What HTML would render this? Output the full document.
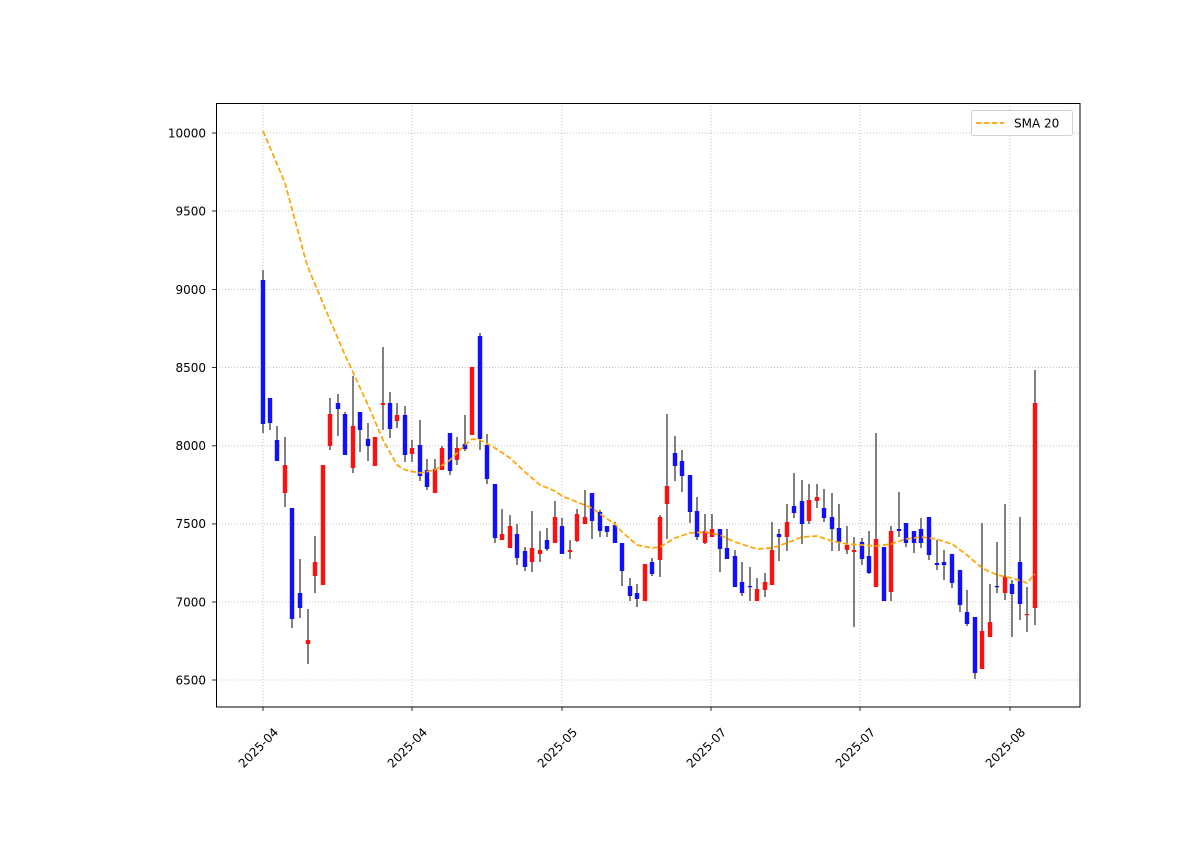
<!DOCTYPE html>
<html><head><meta charset="utf-8"><style>
html,body{margin:0;padding:0;background:#fff;}
svg{display:block;font-family:"DejaVu Sans","Liberation Sans",sans-serif;}
</style></head><body>
<svg id="s" width="1200" height="862" xmlns="http://www.w3.org/2000/svg">
<rect width="1200" height="862" fill="#fff"/>
<g stroke="#b0b0b0" stroke-width="0.8" stroke-dasharray="1,2">
<line x1="216" x2="1080" y1="133" y2="133"/><line x1="216" x2="1080" y1="211" y2="211"/>
<line x1="216" x2="1080" y1="289.5" y2="289.5"/><line x1="216" x2="1080" y1="367.6" y2="367.6"/>
<line x1="216" x2="1080" y1="445.8" y2="445.8"/><line x1="216" x2="1080" y1="523.9" y2="523.9"/>
<line x1="216" x2="1080" y1="602" y2="602"/><line x1="216" x2="1080" y1="680" y2="680"/>
<line y1="103" y2="707" x1="263" x2="263"/><line y1="103" y2="707" x1="412" x2="412"/>
<line y1="103" y2="707" x1="562" x2="562"/><line y1="103" y2="707" x1="711" x2="711"/>
<line y1="103" y2="707" x1="860" x2="860"/><line y1="103" y2="707" x1="1010" x2="1010"/>
</g>
<g id="c"></g>
<polyline fill="none" stroke="#ffa500" stroke-width="1.7" stroke-dasharray="5.5,2.5" points="263,131 285,183 307,265 330,320 345,355 368,405 383,440 397,465 405,470 420,473 435,470 450,460 465,445 472,439 480,440 495,448 510,458 525,472 540,485 555,491 562,496 577,502 592,508 600,514 615,524 622,532 637,545 652,548 660,547 675,538 690,533 705,532 720,535 735,542 757,549 772,548 787,543 802,537 817,536 832,541 847,544 862,545 876,546 891,544 906,539 921,537 936,539 952,544 967,555 982,568 997,575 1012,578 1027,583 1035,574"/>
<rect x="216.5" y="103.5" width="863.5" height="603.5" fill="none" stroke="#000" stroke-width="1"/>
<g stroke="#000" stroke-width="0.8">
<line x1="212" x2="216" y1="133" y2="133"/><line x1="212" x2="216" y1="211" y2="211"/>
<line x1="212" x2="216" y1="289.5" y2="289.5"/><line x1="212" x2="216" y1="367.6" y2="367.6"/>
<line x1="212" x2="216" y1="445.8" y2="445.8"/><line x1="212" x2="216" y1="523.9" y2="523.9"/>
<line x1="212" x2="216" y1="602" y2="602"/><line x1="212" x2="216" y1="680" y2="680"/>
<line y1="707" y2="711" x1="263" x2="263"/><line y1="707" y2="711" x1="412" x2="412"/>
<line y1="707" y2="711" x1="562" x2="562"/><line y1="707" y2="711" x1="711" x2="711"/>
<line y1="707" y2="711" x1="860" x2="860"/><line y1="707" y2="711" x1="1010" x2="1010"/>
</g>
<g font-size="12" fill="#000" text-anchor="end">
<text x="206" y="137.5">10000</text><text x="206" y="215.5">9500</text>
<text x="206" y="294">9000</text><text x="206" y="372">8500</text>
<text x="206" y="450">8000</text><text x="206" y="528">7500</text>
<text x="206" y="606.5">7000</text><text x="206" y="684.5">6500</text>
<text transform="translate(279,733) rotate(-45)">2025-04</text>
<text transform="translate(428,733) rotate(-45)">2025-04</text>
<text transform="translate(578,733) rotate(-45)">2025-05</text>
<text transform="translate(727,733) rotate(-45)">2025-07</text>
<text transform="translate(876,733) rotate(-45)">2025-07</text>
<text transform="translate(1026,733) rotate(-45)">2025-08</text>
</g>
<rect x="971.5" y="110.5" width="101" height="25" rx="2" fill="#fff" stroke="#d0d0d0"/>
<line x1="976" x2="1004" y1="123" y2="123" stroke="#ffa500" stroke-width="1.7" stroke-dasharray="5.5,2.5"/>
<text x="1014" y="127.5" font-size="12">SMA 20</text>
</svg>
<script>
var d=[
[263,'b',280,424,270,433],[270,'b',398,423,398,430],[277,'b',440,461,426,461],[285,'r',465,493,437,507],
[292,'b',508,619,508,628],[300,'b',593,608,559,618],[308,'r',640,644,609,664],[315,'r',562,576,536,593],
[323,'r',465,585,465,585],[330,'r',414,446,398,450],[338,'b',403,409,394,436],[345,'b',414,455,412,455],
[353,'r',426,468,376,473],[360,'b',412,430,412,452],[368,'b',439,446,423,461],[375,'r',437,466,437,466],
[383,'r',403,405,347,430],[390,'b',403,429,392,438],[397,'r',415,421,403,428],[405,'b',415,455,406,462],
[412,'r',448,454,440,462],[420,'b',445,476,420,481],[427,'b',470,487,459,490],[435,'r',469,493,459,493],
[442,'r',448,470,446,470],[450,'b',433,471,433,475],[457,'r',448,460,437,465],[465,'b',444,449,415,451],
[472,'r',367,435,367,435],[480,'b',336,439,333,450],[487,'b',445,479,434,484],[495,'b',484,538,484,543],
[502,'r',534,540,509,540],[510,'r',526,548,515,548],[517,'b',534,558,524,565],[525,'b',551,567,547,571],
[532,'r',548,562,511,572],[540,'r',550,554,531,562],[547,'b',540,549,528,551],[555,'r',517,543,501,543],
[562,'b',526,554,518,554],[570,'r',550,552,540,559],[577,'r',514,541,509,542],[585,'r',517,524,490,524],
[592,'b',493,521,493,539],[600,'b',512,531,510,537],[607,'b',526,532,526,537],[615,'b',525,543,522,543],
[622,'b',543,571,543,586],[630,'b',586,596,578,601],[637,'b',593,599,584,607],[645,'r',564,601,564,601],
[652,'b',562,574,558,576],[660,'r',517,560,515,577],[667,'r',486,504,414,539],[675,'b',453,466,436,481],
[682,'b',461,476,450,492],[690,'b',475,512,475,523],[697,'b',511,537,497,540],[705,'r',531,543,514,544],
[712,'r',529,537,514,537],[720,'b',529,549,529,572],[727,'b',548,559,529,559],[735,'b',556,587,550,587],
[742,'b',582,593,562,596],[750,'b',586,587,567,601],[757,'r',589,601,578,601],[765,'r',582,590,573,597],
[772,'r',550,585,522,585],[779,'b',534,537,529,561],[787,'r',522,537,504,551],[794,'b',506,513,473,518],
[802,'b',501,524,480,544],[809,'r',500,521,484,524],[817,'r',497,501,484,508],[824,'b',508,518,489,522],
[832,'b',517,529,493,551],[839,'b',528,542,504,551],[847,'r',545,550,526,554],[854,'r',550,552,537,627],
[862,'b',542,559,538,565],[869,'b',556,573,531,574],[876,'r',539,587,433,587],[884,'b',547,601,547,601],
[891,'r',531,592,526,601],[899,'b',529,531,492,537],[906,'b',523,543,523,547],[914,'b',531,543,531,553],
[921,'b',529,543,518,548],[929,'b',517,555,517,560],[937,'b',563,565,540,570],[944,'b',562,565,550,580],
[952,'b',554,583,554,588],[960,'b',570,605,570,612],[967,'b',612,624,590,626],[975,'b',617,673,617,679],
[982,'r',631,669,523,669],[990,'r',622,637,584,637],[997,'b',586,587,542,593],[1005,'r',577,593,504,600],
[1012,'b',584,594,580,637],[1020,'b',562,604,517,620],[1027,'r',614,615,587,632],[1035,'r',403,608,370,625]];
var g=document.getElementById('c'),h='';
d.forEach(function(c){var x=c[0];
h+='<line x1="'+x+'" x2="'+x+'" y1="'+c[4]+'" y2="'+c[5]+'" stroke="#000" stroke-width="1"/>';
h+='<rect x="'+(x-2.2)+'" y="'+c[2]+'" width="4.4" height="'+Math.max(1.2,c[3]-c[2])+'" fill="'+(c[1]=='b'?'#1010ff':'#ff1010')+'"/>';});
g.innerHTML=h;
</script>
</body></html>
